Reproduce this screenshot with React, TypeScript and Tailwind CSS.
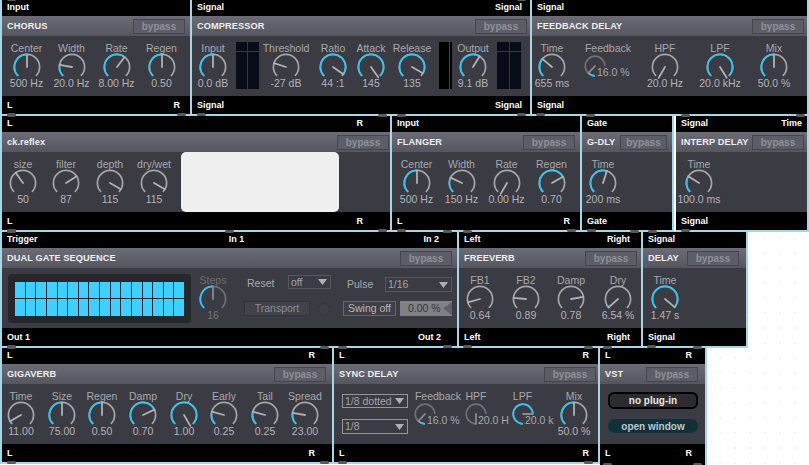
import React from "react";

const polar = (r: number, deg: number, c: number) => {
  const a = (deg * Math.PI) / 180;
  return [c + r * Math.sin(a), c - r * Math.cos(a)];
};
const arc = (r: number, from: number, to: number, c: number) => {
  const [x1, y1] = polar(r, from, c);
  const [x2, y2] = polar(r, to, c);
  return `M${x1} ${y1}A${r} ${r} 0 ${to - from > 180 ? 1 : 0} 1 ${x2} ${y2}`;
};

function Dial({ size, r, start, end, angle, fill, plain, dim }: { size: number; r: number; start: number; end: number; angle: number; fill?: number; plain?: boolean; dim?: boolean }) {
  const c = size / 2;
  const f = Math.max(start, Math.min(end, fill ?? angle));
  const [nx, ny] = polar(r, angle, c);
  const gray = dim ? "#6f7076" : "#a6a6a8";
  return (
    <svg width={size} height={size} viewBox={`0 0 ${size} ${size}`} className="shrink-0">
      <path d={arc(r, start, end, c)} fill="none" stroke={gray} strokeWidth="1.7" />
      {!plain && f > start && <path d={arc(r, start, f, c)} fill="none" stroke="#35c4f2" strokeWidth="1.8" />}
      <path d={`M${c} ${c}L${nx} ${ny}`} stroke={dim ? "#8a8b90" : "#b2b2b4"} strokeWidth="1.8" strokeLinecap="round" />
    </svg>
  );
}

function Knob({ w, label, value, angle, fill, plain, dim }: { w: string; label: string; value: string; angle: number; fill?: number; plain?: boolean; dim?: boolean }) {
  return (
    <div className={`${w} shrink-0 flex flex-col items-center pt-[6px]`}>
      <div className={`h-[12px] leading-[12px] whitespace-nowrap text-[10.5px] ${dim ? "text-[#6c6d74]" : "text-[#a9a9ad]"}`}>{label}</div>
      <div className="mt-[-1px]">
        <Dial size={28} r={12.6} start={-135} end={135} angle={angle} fill={fill} plain={plain} dim={dim} />
      </div>
      <div className={`mt-[-4px] h-[12px] leading-[12px] whitespace-nowrap text-[10.5px] ${dim ? "text-[#77787e]" : "text-[#b4b4b8]"}`}>{value}</div>
    </div>
  );
}

function SmallKnob({ w, svgMargin, label, value, angle, fill, plain }: { w: string; svgMargin: string; label: string; value: string; angle: number; fill?: number; plain?: boolean }) {
  return (
    <div className={`${w} shrink-0 flex flex-col items-center pt-[6px]`}>
      <div className="h-[12px] leading-[12px] whitespace-nowrap text-[10.5px] text-[#a9a9ad]">{label}</div>
      <div className="flex w-full mt-[1px]">
        <div className={svgMargin}>
          <Dial size={22} r={9.8} start={180} end={450} angle={angle} fill={fill} plain={plain} dim />
        </div>
        <div className="ml-[-9px] mt-[11px] h-[12px] leading-[12px] whitespace-nowrap text-[10.5px] text-[#a9a9ad]">{value}</div>
      </div>
    </div>
  );
}

function Meter({ margin, width }: { margin: string; width: string }) {
  return (
    <div className={`${margin} ${width} mt-[6px] h-[47px] shrink-0 grid grid-cols-2 grid-rows-[9px_1fr] gap-px bg-[#333746]`}>
      <div className="bg-[#080b18]" />
      <div className="bg-[#080b18]" />
      <div className="bg-[#080b18]" />
      <div className="bg-[#080b18]" />
    </div>
  );
}

function Select({ label, box }: { label: string; box: string }) {
  return (
    <div className={`${box} shrink-0 flex items-center justify-between px-[2px] border text-[10.5px] leading-none text-[#a4a4a8]`}>
      <span className="whitespace-nowrap">{label}</span>
      <svg width="9" height="6" viewBox="0 0 9 6" className="mr-[1px]">
        <path d="M0 0H9L4.5 6Z" fill="#b0b0b4" />
      </svg>
    </div>
  );
}

function Nub({ place }: { place: string }) {
  return <div className={`absolute z-10 w-[9px] h-[3px] rounded-[1.5px] bg-[#57585c] ${place}`} />;
}

type PanelProps = {
  width: string;
  title: string;
  bypass: string;
  top: React.ReactNode;
  bottom: React.ReactNode;
  pr: string;
  topNubs?: string[];
  bottomNubs?: string[];
  firstEdge?: boolean;
  leftWhite?: boolean;
  tall?: boolean;
  children: React.ReactNode;
};

function Panel({ width, title, bypass, top, bottom, pr, topNubs = [], bottomNubs = [], firstEdge, leftWhite, tall, children }: PanelProps) {
  return (
    <div
      className={`${width} relative shrink-0 flex flex-col border-r-2 border-[#a8d6e6] ${tall ? "h-[118px]" : "h-[116px] border-b-2"} ${firstEdge ? "border-l-2" : ""} ${leftWhite ? "border-l-2 border-l-white" : ""}`}
    >
      {topNubs.map((p) => (
        <Nub key={p} place={`top-[-2px] ${p}`} />
      ))}
      {bottomNubs.map((p) => (
        <Nub key={p} place={`${tall ? "bottom-[0px]" : "bottom-[-2px]"} ${p}`} />
      ))}
      <div className={`h-[16px] shrink-0 bg-black flex items-center justify-between pl-[5px] ${pr} text-[9px] font-bold text-white`}>{top}</div>
      <div className="h-[20px] shrink-0 bg-linear-to-b from-[#6b6c76] to-[#55565f] flex items-center justify-between pl-[5px]">
        <span className="pt-[1px] text-[9.2px] font-bold tracking-[0.1px] text-[#eeeeee] whitespace-nowrap">{title}</span>
        <div className={`${bypass} h-[15px] shrink-0 flex items-center justify-center border border-[#44454e] bg-[#5c5d67] text-[10px] font-bold text-[#8f9098]`}>bypass</div>
      </div>
      <div className="h-[60px] shrink-0 bg-[#3a3b43] flex overflow-visible">{children}</div>
      <div className={`grow bg-black flex items-start pt-[3px] justify-between pl-[5px] ${pr} text-[9px] font-bold text-white leading-[12px]`}>{bottom}</div>
    </div>
  );
}

export default function App() {
  return (
    <div className="w-[809px] h-[465px] overflow-hidden bg-white bg-[radial-gradient(circle,#dcdcdc_0.7px,transparent_0.9px)] bg-[length:15px_15px] bg-[position:-7.5px_5.5px] font-['Liberation_Sans',Arial,sans-serif]">
      {/* Row 1 */}
      <div className="flex h-[116px]">
        <Panel width="w-[192px]" firstEdge title="CHORUS" bypass="w-[52px] mr-[5px]" top={<span>Input</span>} bottom={<><span>L</span><span>R</span></>} pr="pr-[10px]" topNubs={["left-[5px]"]} bottomNubs={["left-[5px]", "left-[175px]"]}>
          <div className="flex pl-[2px]">
            <Knob w="w-[45px]" label="Center" value="500 Hz" angle={0} />
            <Knob w="w-[45px]" label="Width" value="20.0 Hz" angle={-80} />
            <Knob w="w-[45px]" label="Rate" value="8.00 Hz" angle={37} />
            <Knob w="w-[45px]" label="Regen" value="0.50" angle={0} />
          </div>
        </Panel>
        <Panel width="w-[340px]" title="COMPRESSOR" bypass="w-[52px] mr-[3px]" top={<><span>Signal</span><span>Signal</span></>} bottom={<><span>Signal</span><span>Signal</span></>} pr="pr-[8px]" topNubs={["left-[325px]"]} bottomNubs={["left-[5px]", "left-[325px]"]}>
          <Knob w="w-[42px]" label="Input" value="0.0 dB" angle={0} />
          <Meter margin="ml-[2px]" width="w-[23px]" />
          <Knob w="w-[54px]" label="Threshold" value="-27 dB" angle={-72} plain />
          <Knob w="w-[40px]" label="Ratio" value="44 :1" angle={125} />
          <Knob w="w-[36px]" label="Attack" value="145" angle={145} />
          <Knob w="w-[46px]" label="Release" value="135" angle={120} />
          <div className="ml-[4px] w-[13px] mt-[6px] h-[47px] shrink-0 bg-black flex justify-end pr-[2px]">
            <div className="w-[1.5px] h-full bg-[#8a2140]" />
          </div>
          <Knob w="w-[42px]" label="Output" value="9.1 dB" angle={32} />
          <Meter margin="ml-[3px]" width="w-[24px]" />
        </Panel>
        <Panel width="w-[277px]" title="FEEDBACK DELAY" bypass="w-[52px] mr-[3px]" top={<span>Signal</span>} bottom={<span>Signal</span>} pr="pr-[8px]" bottomNubs={["left-[4px]"]}>
          <Knob w="w-[40px]" label="Time" value="655 ms" angle={-50} />
          <div className="ml-[5px]">
            <SmallKnob w="w-[62px]" svgMargin="ml-[7px]" label="Feedback" value="16.0 %" angle={223} />
          </div>
          <div className="ml-[1px]">
            <Knob w="w-[50px]" label="HPF" value="20.0 Hz" angle={-150} plain />
          </div>
          <Knob w="w-[60px]" label="LPF" value="20.0 kHz" angle={148} />
          <Knob w="w-[48px]" label="Mix" value="50.0 %" angle={0} />
        </Panel>
      </div>

      {/* Row 2 */}
      <div className="flex h-[116px]">
        <Panel width="w-[392px]" firstEdge title="ck.reflex" bypass="w-[52px] mr-[1px]" top={<><span>L</span><span>R</span></>} bottom={<><span>L</span><span>R</span></>} pr="pr-[27px]" topNubs={["left-[5px]", "left-[376px]"]} bottomNubs={["left-[5px]", "left-[376px]"]}>
          <Knob w="w-[42px]" label="size" value="50" angle={-35} plain />
          <Knob w="w-[44px]" label="filter" value="87" angle={58} plain />
          <Knob w="w-[44px]" label="depth" value="115" angle={120} plain />
          <Knob w="w-[44px]" label="dry/wet" value="115" angle={120} plain />
          <div className="ml-[5px] w-[158px] h-[60px] shrink-0 rounded-[5px] bg-[#f0f0f0]" />
        </Panel>
        <Panel width="w-[190px]" title="FLANGER" bypass="w-[52px] mr-[5px]" top={<span>Input</span>} bottom={<><span>L</span><span>R</span></>} pr="pr-[10px]" topNubs={["left-[5px]"]} bottomNubs={["left-[5px]", "left-[175px]"]}>
          <div className="flex pl-[2px]">
            <Knob w="w-[45px]" label="Center" value="500 Hz" angle={0} />
            <Knob w="w-[45px]" label="Width" value="150 Hz" angle={-65} />
            <Knob w="w-[45px]" label="Rate" value="0.00 Hz" angle={-150} plain />
            <Knob w="w-[45px]" label="Regen" value="0.70" angle={60} />
          </div>
        </Panel>
        <Panel width="w-[92px]" title="G-DLY" bypass="w-[47px] mr-[5px]" top={<span>Gate</span>} bottom={<span>Gate</span>} pr="pr-[5px]" topNubs={["left-[4px]"]} bottomNubs={["left-[5px]"]}>
          <Knob w="w-[42px]" label="Time" value="200 ms" angle={18} />
        </Panel>
        <Panel width="w-[135px]" leftWhite title="INTERP DELAY" bypass="w-[52px] mr-[3px]" top={<><span>Signal</span><span>Time</span></>} bottom={<span>Signal</span>} pr="pr-[5px]" topNubs={["left-[5px]", "left-[120px]"]} bottomNubs={["left-[5px]"]}>
          <Knob w="w-[46px]" label="Time" value="100.0 ms" angle={-58} />
        </Panel>
      </div>

      {/* Row 3 */}
      <div className="flex h-[116px]">
        <Panel width="w-[459px]" firstEdge title="DUAL GATE SEQUENCE" bypass="w-[52px] mr-[5px]" top={<><span>Trigger</span><span className="ml-[12px]">In 1</span><span>In 2</span></>} bottom={<><span>Out 1</span><span className="mr-[-2px]">Out 2</span></>} pr="pr-[18px]" topNubs={["left-[5px]", "left-[223px]", "left-[441px]"]} bottomNubs={["left-[5px]", "left-[441px]"]}>
          <div className="ml-[6px] mt-[6px] w-[183px] h-[49px] shrink-0 rounded-[4px] bg-[#26272c] flex items-center justify-center">
            <div className="w-[169px] h-[34px] grid grid-cols-16 grid-rows-2 gap-px">
              {Array.from({ length: 32 }).map((_, i) => (
                <div key={i} className="bg-[#3fd0ff]" />
              ))}
            </div>
          </div>
          <Knob w="w-[44px]" label="Steps" value="16" angle={0} dim />
          <div className="ml-[9px] w-[208px] shrink-0 flex flex-col text-[10.5px]">
            <div className="h-[33px] pt-[7px] flex items-start text-[#a9a9ad]">
              <span className="ml-[3px] w-[41px] leading-[16px]">Reset</span>
              <Select label="off" box="w-[43px] h-[14px] border-[#55565e]" />
              <span className="ml-[16px] w-[38px] leading-[16px] mt-[1px]">Pulse</span>
              <Select label="1/16" box="w-[67px] h-[15px] mt-[2px] border-[#55565e]" />
            </div>
            <div className="h-[15px] flex items-center">
              <div className="w-[66px] h-[15px] flex items-center justify-center border border-[#33343b] bg-[#41424a] text-[#8c8d93]">Transport</div>
              <div className="ml-[8px] w-[12px] h-[12px] rounded-full bg-[#3f4047] border border-[#35363c]" />
              <div className="ml-[13px] w-[53px] h-[15px] flex items-center justify-center border border-[#65666c] bg-[#3e3f47] text-[#b8b8bb]">Swing off</div>
              <div className="ml-[4px] w-[52px] h-[15px] flex items-center bg-[#808185] text-[#35363b]">
                <span className="ml-[8px] whitespace-nowrap">0.00 %</span>
                <svg width="9" height="15" viewBox="0 0 9 15" className="ml-auto">
                  <path d="M9 1V14L0 7.5Z" fill="#5f6167" />
                </svg>
              </div>
            </div>
          </div>
        </Panel>
        <Panel width="w-[184px]" title="FREEVERB" bypass="w-[52px] mr-[4px]" top={<><span>Left</span><span>Right</span></>} bottom={<><span>Left</span><span>Right</span></>} pr="pr-[11px]" topNubs={["left-[4px]", "left-[171px]"]} bottomNubs={["left-[4px]"]}>
          <Knob w="w-[42px]" label="FB1" value="0.64" angle={-106} plain />
          <Knob w="w-[50px]" label="FB2" value="0.89" angle={-85} plain />
          <Knob w="w-[40px]" label="Damp" value="0.78" angle={80} plain />
          <Knob w="w-[54px]" label="Dry" value="6.54 %" angle={-132} fill={-118} />
        </Panel>
        <Panel width="w-[105px]" title="DELAY" bypass="w-[52px] mr-[7px]" top={<span>Signal</span>} bottom={<span>Signal</span>} pr="pr-[8px]" topNubs={["left-[5px]"]} bottomNubs={["left-[4px]"]}>
          <Knob w="w-[44px]" label="Time" value="1.47 s" angle={130} />
        </Panel>
      </div>

      {/* Row 4 */}
      <div className="flex h-[118px] items-start">
        <Panel width="w-[334px]" firstEdge title="GIGAVERB" bypass="w-[52px] mr-[6px]" top={<><span>L</span><span>R</span></>} bottom={<><span>L</span><span>R</span></>} pr="pr-[17px]" topNubs={["left-[5px]", "left-[318px]"]} bottomNubs={["left-[5px]", "left-[318px]"]}>
          <Knob w="w-[38px]" label="Time" value="11.00" angle={-120} />
          <Knob w="w-[44px]" label="Size" value="75.00" angle={0} />
          <Knob w="w-[36px]" label="Regen" value="0.50" angle={0} />
          <Knob w="w-[46px]" label="Damp" value="0.70" angle={65} />
          <Knob w="w-[36px]" label="Dry" value="1.00" angle={150} />
          <Knob w="w-[44px]" label="Early" value="0.25" angle={-75} />
          <Knob w="w-[38px]" label="Tail" value="0.25" angle={-75} />
          <Knob w="w-[42px]" label="Spread" value="23.00" angle={-80} />
        </Panel>
        <Panel width="w-[266px]" title="SYNC DELAY" bypass="w-[52px] mr-[2px]" top={<><span>L</span><span>R</span></>} bottom={<><span>L</span><span>R</span></>} pr="pr-[9px]" topNubs={["left-[4px]", "left-[250px]"]} bottomNubs={["left-[4px]", "left-[250px]"]}>
          <div className="ml-[8px] w-[66px] shrink-0 flex flex-col pt-[10px]">
            <Select label="1/8 dotted" box="w-[66px] h-[14px] border-[#97979b]" />
            <Select label="1/8" box="w-[66px] h-[15px] mt-[11px] border-[#97979b]" />
          </div>
          <div className="ml-[4px]">
            <SmallKnob w="w-[52px]" svgMargin="ml-[2px]" label="Feedback" value="16.0 %" angle={223} />
          </div>
          <SmallKnob w="w-[24px]" svgMargin="ml-[1px]" label="HPF" value="20.0 H" angle={180} plain />
          <SmallKnob w="w-[69px]" svgMargin="ml-[24px]" label="LPF" value="20.0 k" angle={450} />
          <Knob w="w-[34px]" label="Mix" value="50.0 %" angle={0} />
        </Panel>
        <Panel width="w-[107px]" tall title="VST" bypass="w-[52px] mr-[7px]" top={<><span>L</span><span>R</span></>} bottom={<><span>L</span><span>R</span></>} pr="pr-[13px]" topNubs={["left-[3px]", "left-[93px]"]} bottomNubs={["left-[3px]", "left-[93px]"]}>
          <div className="ml-[8px] w-[90px] shrink-0 flex flex-col pt-[8px] text-[10px] font-bold">
            <div className="h-[17px] flex items-center justify-center rounded-[6px] border-2 border-black bg-[#2c2c2e] text-[#e6e6e6]">no plug-in</div>
            <div className="mt-[10px] h-[14px] flex items-center justify-center rounded-full bg-[#12303a] text-[#bcc8cc]">open window</div>
          </div>
        </Panel>
      </div>
    </div>
  );
}
